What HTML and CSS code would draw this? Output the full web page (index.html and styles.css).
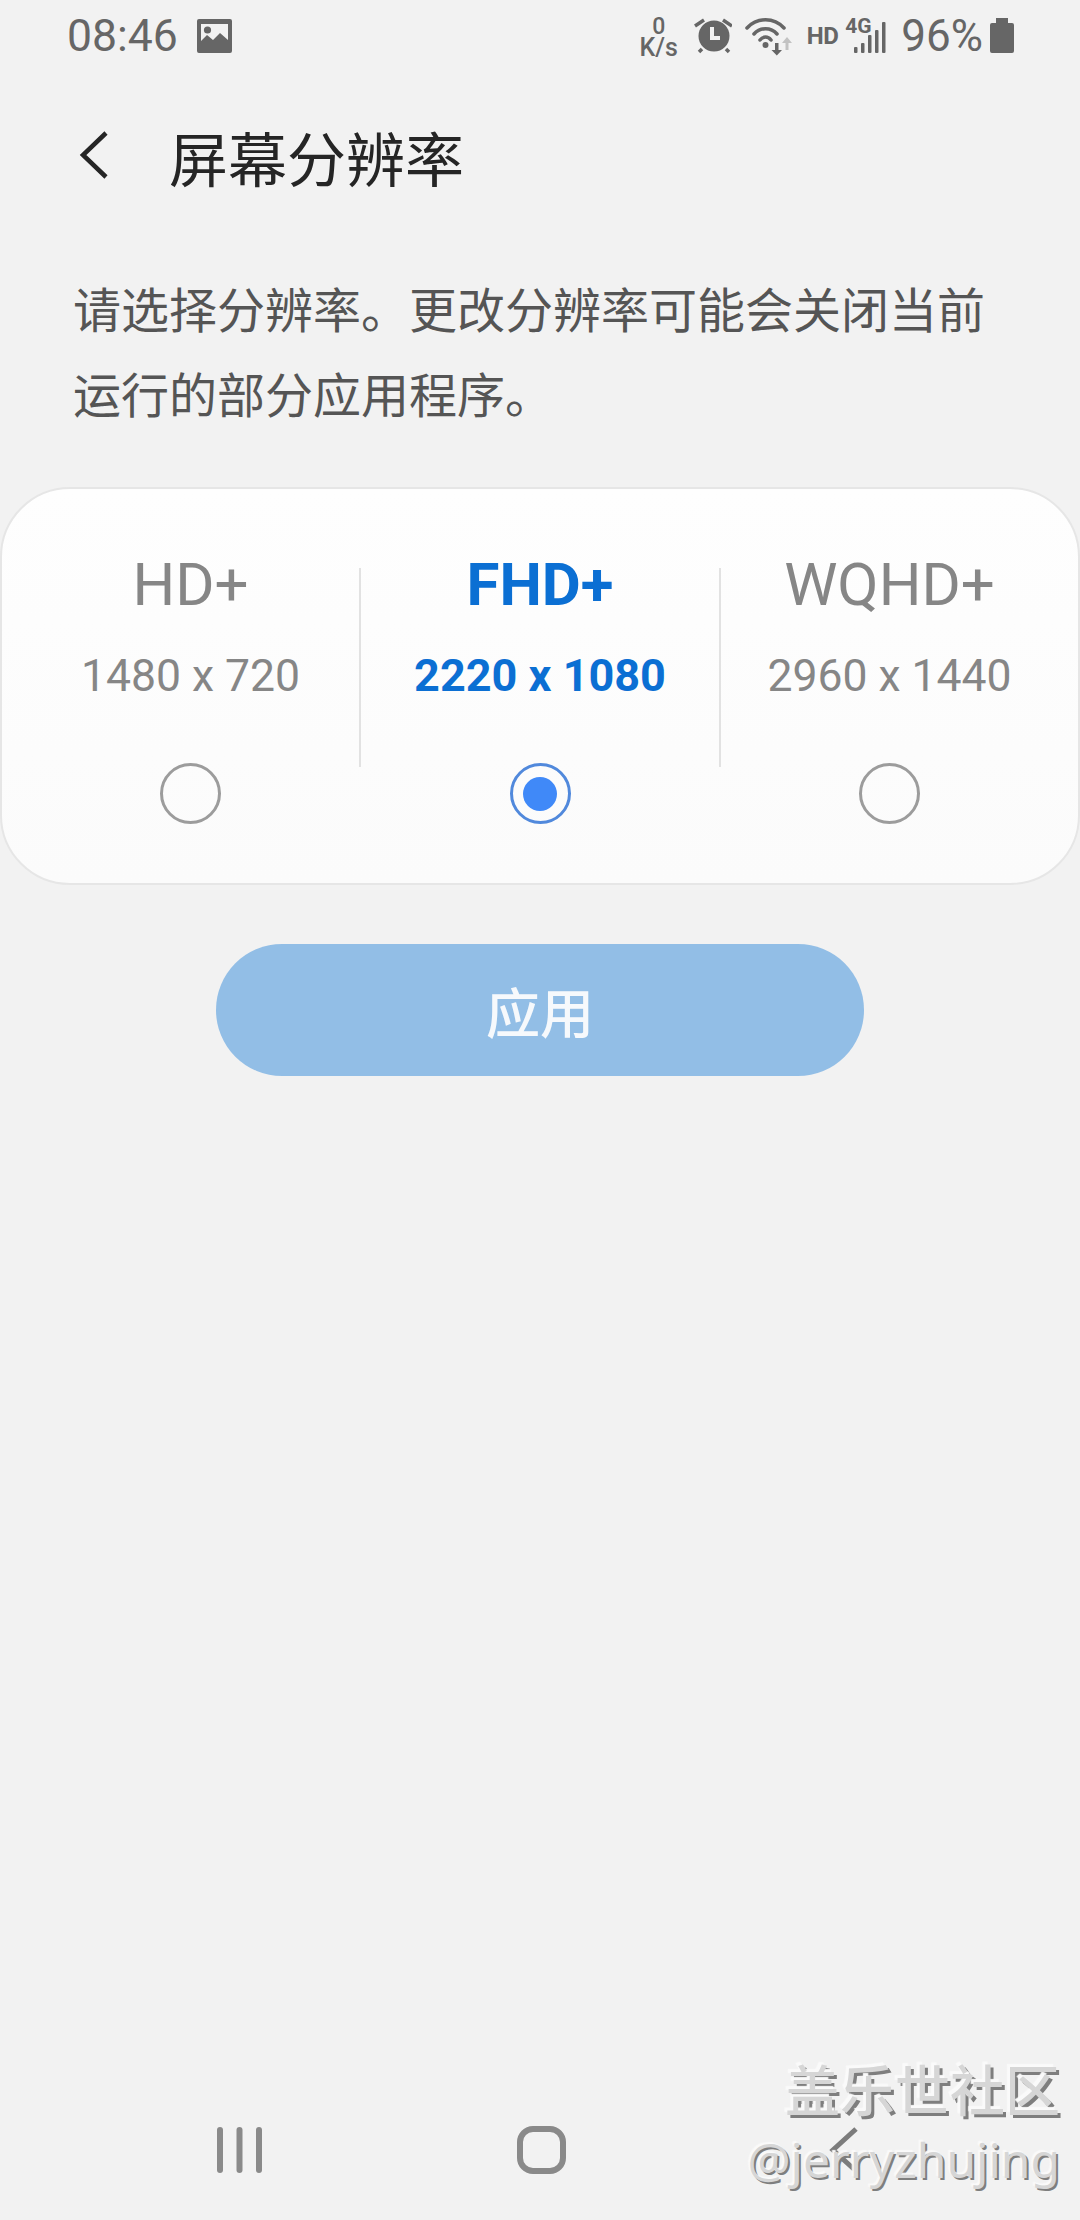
FILE: index.html
```html
<!DOCTYPE html>
<html lang="zh-CN">
<head>
<meta charset="utf-8">
<title>屏幕分辨率</title>
<link rel="stylesheet" href="styles.css">
</head>
<body>
<div class="screen">
  <header class="status">
    <div class="status-left">
      <span class="time">08:46</span>
      <svg class="ic-image" viewBox="0 0 35 34"><path fill="#666" fill-rule="evenodd" d="M2 0h31a2 2 0 0 1 2 2v30a2 2 0 0 1-2 2H2a2 2 0 0 1-2-2V2a2 2 0 0 1 2-2zM4 5v17l6-6 6 5 7-7 8 7V5z"/><circle cx="10.500" cy="11" r="3.600" fill="#666"/></svg>
    </div>
    <div class="status-right">
      <div class="speed"><span class="speed-num">0</span><span class="speed-unit">K/s</span></div>
      <svg class="ic-alarm" viewBox="0 0 38 36">
        <circle cx="20" cy="18" r="15.500" fill="#666"/>
        <path d="M1 8l9-6M29 2l9 6M8 31l-3 3M32 31l3 3" stroke="#666" stroke-width="3.500" fill="none"/>
        <path d="M18 9v11h8" stroke="#f2f2f2" stroke-width="4" fill="none"/>
      </svg>
      <svg class="ic-wifi" viewBox="0 0 48 38">
        <g fill="none" stroke="#666" stroke-width="3.500" stroke-linecap="round">
          <path d="M2 10C12 -1 29 -1 39 10"/>
          <path d="M9 16C15 9 26 9 32 16"/>
          <path d="M15 22C18 18 23 18 26 22"/>
        </g>
        <circle cx="20.500" cy="27" r="3" fill="#666"/>
        <path d="M30 25h3.500v7H37l-5.200 5.500L26.500 32H30z" fill="#666"/>
        <path d="M40.500 32h3v-7H47l-5-6-5 6h3.500z" fill="#c2c2c2"/>
      </svg>
      <span class="hd">HD</span>
      <div class="signal">
        <span class="net">4G</span>
        <svg class="ic-signal" viewBox="0 0 32 31">
          <g fill="#666">
            <rect x="0" y="25" width="3.500" height="6" rx="1"/>
            <rect x="7" y="21" width="3.500" height="10" rx="1"/>
            <rect x="14" y="13" width="3.500" height="18" rx="1"/>
            <rect x="21" y="8" width="3.500" height="23" rx="1"/>
            <rect x="28" y="0" width="3.500" height="31" rx="1"/>
          </g>
        </svg>
      </div>
      <span class="battery-level">96%</span>
      <svg class="ic-battery" viewBox="0 0 24 35"><path fill="#666" d="M6 0h12v5h4a2 2 0 0 1 2 2v26a2 2 0 0 1-2 2H2a2 2 0 0 1-2-2V7a2 2 0 0 1 2-2h4z"/></svg>
    </div>
  </header>

  <div class="titlebar">
    <svg class="ic-back" viewBox="0 0 30 48"><path d="M27 2L4 24l23 22" fill="none" stroke="#252525" stroke-width="4.500"/></svg>
    <h1 class="title">屏幕分辨率</h1>
  </div>

  <p class="desc">请选择分辨率。更改分辨率可能会关闭当前运行的部分应用程序。</p>

  <section class="card">
    <div class="option">
      <div class="opt-name">HD+</div>
      <div class="opt-size">1480 x 720</div>
      <div class="radio"></div>
    </div>
    <div class="divider"></div>
    <div class="option selected">
      <div class="opt-name">FHD+</div>
      <div class="opt-size">2220 x 1080</div>
      <div class="radio"><span class="radio-dot"></span></div>
    </div>
    <div class="divider"></div>
    <div class="option">
      <div class="opt-name">WQHD+</div>
      <div class="opt-size">2960 x 1440</div>
      <div class="radio"></div>
    </div>
  </section>

  <div class="apply">应用</div>

  <nav class="navbar">
    <svg class="ic-recent" viewBox="0 0 45 46"><g fill="#8a8a8a"><rect x="0" y="0" width="6" height="46" rx="3"/><rect x="19.500" y="0" width="6" height="46" rx="3"/><rect x="39" y="0" width="6" height="46" rx="3"/></g></svg>
    <svg class="ic-home" viewBox="0 0 49 48"><rect x="3" y="3" width="43" height="42" rx="13" fill="none" stroke="#8a8a8a" stroke-width="6"/></svg>
    <svg class="ic-navback" viewBox="0 0 30 46"><path d="M27 2L4 23l23 21" fill="none" stroke="#7c7c7c" stroke-width="5"/></svg>
  </nav>

  <div class="watermark">
    <div class="wm-cn">盖乐世社区</div>
    <div class="wm-en">@jerryzhujing</div>
  </div>
</div>
</body>
</html>
```
FILE: styles.css
```css
* { box-sizing: border-box; }
html, body { margin: 0; padding: 0; }
body {
  background: #f2f2f2;
  font-family: Roboto, "Noto Sans CJK SC", sans-serif;
}
.screen {
  position: relative;
  width: 1080px;
  height: 2220px;
  display: flex;
  flex-direction: column;
  overflow: hidden;
}

/* status bar */
.status {
  height: 72px;
  padding: 0 66px 0 67px;
  display: flex;
  justify-content: space-between;
  align-items: flex-start;
  color: #666;
}
.status-left { display: flex; align-items: flex-start; padding-top: 19px; }
.time { font-size: 44.500px; line-height: 34px; }
.ic-image { width: 35px; height: 34px; margin-left: 19px; }
.status-right { display: flex; align-items: flex-start; padding-top: 18px; }
.speed { width: 36px; display: flex; flex-direction: column; align-items: center; font-weight: 500; }
.speed-num { font-size: 23px; line-height: 17px; }
.speed-unit { font-size: 25px; line-height: 20px; margin-top: 3px; white-space: nowrap; }
.ic-alarm { width: 38px; height: 36px; margin-left: 17px; }
.ic-wifi { width: 48px; height: 38px; margin-left: 13px; }
.hd { font-size: 24px; line-height: 18px; font-weight: 700; letter-spacing: -0.5px; margin: 9px 0 0 14px; }
.signal { position: relative; width: 41px; height: 35px; margin-left: 7px; }
.net { position: absolute; left: 0; top: 0; font-size: 21px; line-height: 16px; font-weight: 700; }
.ic-signal { position: absolute; left: 9px; top: 4px; width: 32px; height: 31px; }
.battery-level { font-size: 44px; line-height: 36px; margin-left: 15px; }
.ic-battery { width: 24px; height: 35px; margin-left: 7px; }

/* title */
.titlebar {
  height: 122px;
  margin-top: 22px;
  padding: 0 0 0 79px;
  display: flex;
  align-items: center;
  gap: 60px;
}
.ic-back { width: 30px; height: 48px; }
.title {
  margin: 0;
  padding-top: 3px;
  font-family: "Noto Sans CJK SC", sans-serif;
  font-size: 59px;
  font-weight: 400;
  line-height: 60px;
  color: #252525;
}

/* description */
.desc {
  margin: 49px 60px 0 73px;
  font-family: "Noto Sans CJK SC", sans-serif;
  font-size: 48px;
  line-height: 85px;
  color: #555;
}

/* option card */
.card {
  margin-top: 52px;
  height: 398px;
  padding: 0 20px;
  display: grid;
  grid-template-columns: 337px 2px 358px 2px 337px;
  background: linear-gradient(#fefefe, #fbfbfb);
  border: 2px solid #e6e6e6;
  border-radius: 70px;
}
.option {
  display: flex;
  flex-direction: column;
  align-items: center;
  color: #868686;
}
.opt-name { margin-top: 64px; font-size: 60px; line-height: 64px; }
.opt-size { margin-top: 33px; font-size: 44.500px; line-height: 52px; }
.radio {
  margin-top: 61px;
  width: 61px;
  height: 61px;
  border: 3px solid #9c9c9c;
  border-radius: 50%;
  display: flex;
  align-items: center;
  justify-content: center;
}
.selected { color: #0b6fd3; }
.selected .opt-name, .selected .opt-size { font-weight: 700; }
.selected .opt-size { font-size: 45px; }
.selected .radio { border-color: #5189dc; }
.radio-dot { width: 34px; height: 34px; border-radius: 50%; background: #4089f8; }
.divider {
  width: 2px;
  height: 199px;
  margin-top: 79px;
  background: #e2e2e2;
}

/* apply */
.apply {
  align-self: center;
  width: 648px;
  height: 132px;
  margin-top: 59px;
  border-radius: 66px;
  background: #92bee6;
  color: #f6f9fc;
  font-family: "Noto Sans CJK SC", sans-serif;
  font-size: 54px;
  font-weight: 500;
  display: flex;
  align-items: center;
  justify-content: center;
}

/* nav */
.navbar {
  margin-top: auto;
  height: 94px;
  padding-left: 217px;
  display: flex;
  align-items: flex-start;
  flex-shrink: 0;
}
.ic-recent { width: 45px; height: 46px; margin-top: 1px; }
.ic-home { width: 49px; height: 48px; margin-left: 255px; }
.ic-navback { width: 30px; height: 46px; margin: 1px 0 0 263px; }

/* watermark */
.watermark {
  position: absolute;
  right: 20px;
  top: 2052px;
  text-align: right;
  color: #d6d6d6;
}
.wm-cn {
  font-family: "Noto Sans CJK SC", sans-serif;
  font-size: 55px;
  font-weight: 500;
  line-height: 70px;
  text-shadow: -3px -3px 1px #fafafa, 3px 3px 0 #7e7e7e;
}
.wm-en {
  font-family: "Noto Sans", sans-serif;
  font-size: 48px;
  line-height: 64px;
  margin-top: 6px;
  text-shadow: -2px -2px 1px #fafafa, 2px 2px 0 #7e7e7e;
}
```
